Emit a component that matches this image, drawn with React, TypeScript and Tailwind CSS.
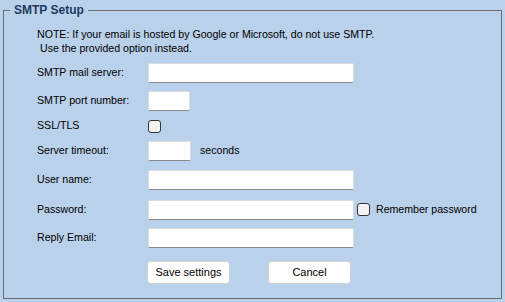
import React from 'react';

const inputCls =
  'h-[20px] bg-white rounded-[2px] border border-[#dcdcdc] border-b-[#8a8a8a] outline-none px-1 text-[11px]';

const CheckBox = () => (
  <span className="inline-block w-[13px] h-[13px] rounded-[3px] border border-[#333333] bg-[#f3f3f3]" />
);

const Row: React.FC<{ label: string; className?: string; children: React.ReactNode }> = ({
  label,
  className,
  children,
}) => (
  <div className={`flex items-center h-[20px] ${className ?? ''}`}>
    <span className="w-[111px] shrink-0">{label}</span>
    {children}
  </div>
);

export default function App() {
  return (
    <div
      className="w-[505px] h-[302px] bg-[#b9d1ea] pt-[3px] pl-[3px] text-[10.6px] text-black"
      style={{ fontFamily: '"Liberation Sans", Arial, sans-serif' }}
    >
      <fieldset className="w-[499px] h-[296px] border border-[#6d6d6d]">
        <legend className="ml-[6px] px-[4px] text-[12px] font-bold leading-[15px] text-[#1e3a5f]">
          SMTP Setup
        </legend>

        <div className="pl-[33px]">
          {/* Note */}
          <div className="mt-[9px] leading-[14px]">
            <p>NOTE: If your email is hosted by Google or Microsoft, do not use SMTP.</p>
            <p className="pl-[3px]">Use the provided option instead.</p>
          </div>

          {/* Fields */}
          <div className="flex flex-col">
            <Row label="SMTP mail server:" className="mt-[8px]">
              <input className={`${inputCls} w-[206px]`} />
            </Row>
            <Row label="SMTP port number:" className="mt-[8px]">
              <input className={`${inputCls} w-[42px]`} />
            </Row>
            <Row label="SSL/TLS" className="mt-[5px]">
              <CheckBox />
            </Row>
            <Row label="Server timeout:" className="mt-[5px]">
              <input className={`${inputCls} w-[43px]`} />
              <span className="ml-[9px]">seconds</span>
            </Row>
            <Row label="User name:" className="mt-[9px]">
              <input className={`${inputCls} w-[206px]`} />
            </Row>
            <Row label="Password:" className="mt-[10px]">
              <input type="password" className={`${inputCls} w-[206px]`} />
              <span className="ml-[3px] flex items-center">
                <CheckBox />
                <span className="ml-[6px]">Remember password</span>
              </span>
            </Row>
            <Row label="Reply Email:" className="mt-[8px]">
              <input className={`${inputCls} w-[206px]`} />
            </Row>

            {/* Buttons */}
            <div className="flex mt-[13px] pl-[110px]">
              <button className="w-[83px] h-[23px] bg-white rounded-[4px] border border-[#d4d4d4] text-[11px]">
                Save settings
              </button>
              <button className="ml-[38px] w-[83px] h-[23px] bg-white rounded-[4px] border border-[#d4d4d4] text-[11px]">
                Cancel
              </button>
            </div>
          </div>
        </div>
      </fieldset>
    </div>
  );
}
